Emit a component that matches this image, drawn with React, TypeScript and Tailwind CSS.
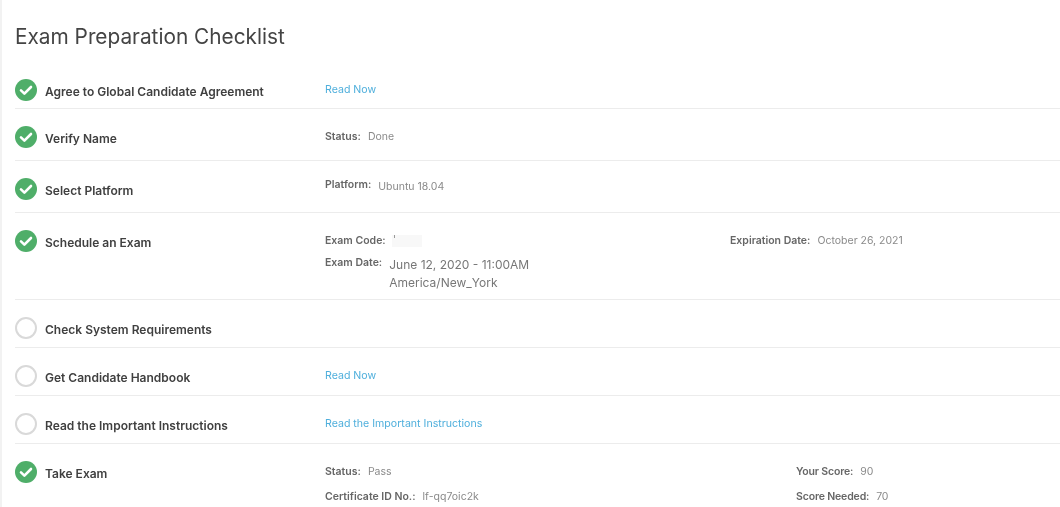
import React from "react";

function StatusIcon({ done }: { done: boolean }) {
  if (!done) {
    return <div className="mt-px h-[22px] w-[22px] shrink-0 rounded-full border-2 border-[#d9d9d9] bg-white" />;
  }
  return (
    <svg className="mt-px h-[22px] w-[22px] shrink-0" viewBox="0 0 22 22">
      <circle cx="11" cy="11" r="11" fill="#4fae69" />
      <path d="M6 11.4l3.4 3.2L16 8" fill="none" stroke="#fff" strokeWidth="2.6" strokeLinecap="round" strokeLinejoin="round" />
    </svg>
  );
}

function Field({ label, value, className, valueClass }: { label: string; value: string; className?: string; valueClass?: string }) {
  return (
    <div className={`flex text-[10.5px] leading-[14px] ${className ?? ""}`}>
      <span className="font-semibold text-[#666]">{label}</span>
      <span className={`ml-[7px] text-[#8a8a8a] ${valueClass ?? ""}`}>{value}</span>
    </div>
  );
}

function ReadLink({ text }: { text: string }) {
  return <a className="block pt-[5px] text-[10.6px] leading-[14px] text-[#4fafdc]">{text}</a>;
}

function Row({
  done,
  title,
  height,
  last,
  children,
}: {
  done: boolean;
  title: string;
  height: string;
  last?: boolean;
  children?: React.ReactNode;
}) {
  return (
    <div className={`flex items-start ${height} ${last ? "" : "border-b border-[#ececec]"}`}>
      <div className="flex w-[310px] shrink-0 items-start gap-2">
        <StatusIcon done={done} />
        <span className="mt-[3px] text-[12px] font-semibold leading-[22px] text-[#404040]">{title}</span>
      </div>
      <div className="min-w-0 flex-1">{children}</div>
    </div>
  );
}

export default function App() {
  return (
    <div className="h-[507px] w-[1060px] overflow-hidden border-l-2 border-[#f2f2f2] bg-white pl-[13px] blur-[0.4px] [font-family:Inter,'Liberation_Sans',sans-serif]">
      <h1 className="pt-[24px] text-[20.8px] font-normal leading-[26px] text-[#444]">Exam Preparation Checklist</h1>

      <div className="mt-[28px]">
        <Row done title="Agree to Global Candidate Agreement" height="h-[31px]">
          <ReadLink text="Read Now" />
        </Row>
        <div className="h-[16px]" />
        <Row done title="Verify Name" height="h-[36px]">
          <Field label="Status:" value="Done" className="pt-[5px]" />
        </Row>
        <div className="h-[16px]" />
        <Row done title="Select Platform" height="h-[36px]">
          <Field label="Platform:" value="Ubuntu 18.04" className="pt-[1px]" valueClass="mt-[2px]" />
        </Row>
        <div className="h-[16px]" />
        <Row done title="Schedule an Exam" height="h-[71px]">
          <div className="flex pt-[5px]">
            <div className="flex w-[405px] text-[10.5px] leading-[14px]">
              <span className="font-semibold text-[#666]">Exam Code:</span>
              <span className="ml-[6px] mt-[1px] flex h-[12px] w-[30px] bg-[#f8f8f8]">
                <span className="ml-[2px] h-[3px] w-[1px] bg-[#999]" />
              </span>
            </div>
            <Field label="Expiration Date:" value="October 26, 2021" />
          </div>
          <div className="mt-[8px] flex">
            <span className="text-[10.5px] font-semibold leading-[14px] text-[#666]">Exam Date:</span>
            <span className="ml-[7px] text-[12px] leading-[18px] text-[#777]">
              June 12, 2020 - 11:00AM
              <br />
              America/New_York
            </span>
          </div>
        </Row>
        <div className="h-[16px]" />
        <Row done={false} title="Check System Requirements" height="h-[32px]" />
        <div className="h-[16px]" />
        <Row done={false} title="Get Candidate Handbook" height="h-[32px]">
          <ReadLink text="Read Now" />
        </Row>
        <div className="h-[16px]" />
        <Row done={false} title="Read the Important Instructions" height="h-[32px]">
          <ReadLink text="Read the Important Instructions" />
        </Row>
        <div className="h-[16px]" />
        <Row done title="Take Exam" height="h-[51px]" last>
          <div className="flex pt-[5px]">
            <div className="w-[471px]">
              <Field label="Status:" value="Pass" />
              <Field label="Certificate ID No.:" value="lf-qq7oic2k" className="mt-[11px]" />
            </div>
            <div>
              <Field label="Your Score:" value="90" className="tracking-[-0.15px]" />
              <Field label="Score Needed:" value="70" className="mt-[11px] tracking-[-0.15px]" />
            </div>
          </div>
        </Row>
      </div>
    </div>
  );
}
